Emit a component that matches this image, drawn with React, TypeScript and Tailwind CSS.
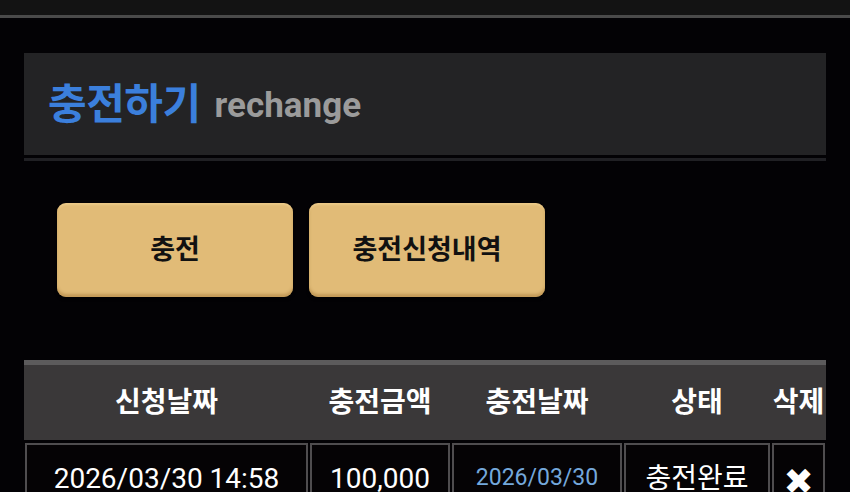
import React from "react";

const font = { fontFamily: "Roboto, 'Noto Sans CJK KR', 'Noto Sans', sans-serif" };

const cols = [283, 140, 170, 146, 53];

function HeaderCell({ w, children }: { w: number; children: React.ReactNode }) {
  return (
    <div
      className="flex shrink-0 items-center justify-center text-[28px] font-bold text-white"
      style={{ width: w }}
    >
      {children}
    </div>
  );
}

function BodyCell({ w, children }: { w: number; children: React.ReactNode }) {
  return (
    <div
      className="flex h-[60px] shrink-0 items-start justify-center border-2 border-[#4f4d4f] bg-[#050305] pt-[13px]"
      style={{ width: w }}
    >
      {children}
    </div>
  );
}

const btn =
  "flex h-[94px] w-[236px] items-center justify-center rounded-[9px] bg-[#e1bb77] text-[27px] font-bold text-[#111] shadow-[inset_0_-3px_3px_rgba(160,115,50,0.45),inset_0_2px_2px_rgba(255,230,170,0.35),0_2px_3px_rgba(0,0,0,0.6)]";

export default function App() {
  return (
    <div className="h-[492px] w-[850px] overflow-hidden bg-[#030205]" style={font}>
      {/* top bar */}
      <div className="h-[15px] bg-[#131313]" />
      <div className="h-[3px] bg-[#4a4a4a]" />

      <div className="px-[24px] pt-[35px]">
        {/* page title */}
        <div className="flex h-[102px] items-center gap-[14px] bg-[#232325] pl-[24px]">
          <span className="text-[42px] font-bold tracking-[-0.5px] text-[#3b7fdc]">충전하기</span>
          <span className="mt-[5px] text-[35px] font-bold text-[#9b9b9b]">rechange</span>
        </div>
        <div className="mt-[3px] h-[3px] bg-[#202024]" />

        {/* actions */}
        <div className="flex gap-[16px] pl-[33px] pt-[42px]">
          <button className={btn}>충전</button>
          <button className={btn}>충전신청내역</button>
        </div>

        {/* history table */}
        <div className="mt-[63px] w-[802px] overflow-hidden">
          <div className="h-[5px] bg-[#5c5b5c]" />
          <div className="flex h-[75px] gap-[2px] bg-[#3a3839] px-[1px]">
            <HeaderCell w={cols[0]}>신청날짜</HeaderCell>
            <HeaderCell w={cols[1]}>충전금액</HeaderCell>
            <HeaderCell w={cols[2]}>충전날짜</HeaderCell>
            <HeaderCell w={cols[3]}>상태</HeaderCell>
            <HeaderCell w={cols[4]}>삭제</HeaderCell>
          </div>
          <div className="mt-[3px] flex gap-[2px] px-[1px]">
            <BodyCell w={cols[0]}>
              <span className="text-[28px] text-white">2026/03/30 14:58</span>
            </BodyCell>
            <BodyCell w={cols[1]}>
              <span className="text-[28px] text-white">100,000</span>
            </BodyCell>
            <BodyCell w={cols[2]}>
              <span className="mt-[3px] text-[23px] text-[#74a8dc]">2026/03/30</span>
            </BodyCell>
            <BodyCell w={cols[3]}>
              <span className="text-[28px] text-white">충전완료</span>
            </BodyCell>
            <BodyCell w={cols[4]}>
              <span
                className="mt-[6px] text-[36px] leading-none text-white"
                style={{ fontFamily: "'DejaVu Sans', sans-serif" }}
              >
                ✖
              </span>
            </BodyCell>
          </div>
        </div>
      </div>
    </div>
  );
}
